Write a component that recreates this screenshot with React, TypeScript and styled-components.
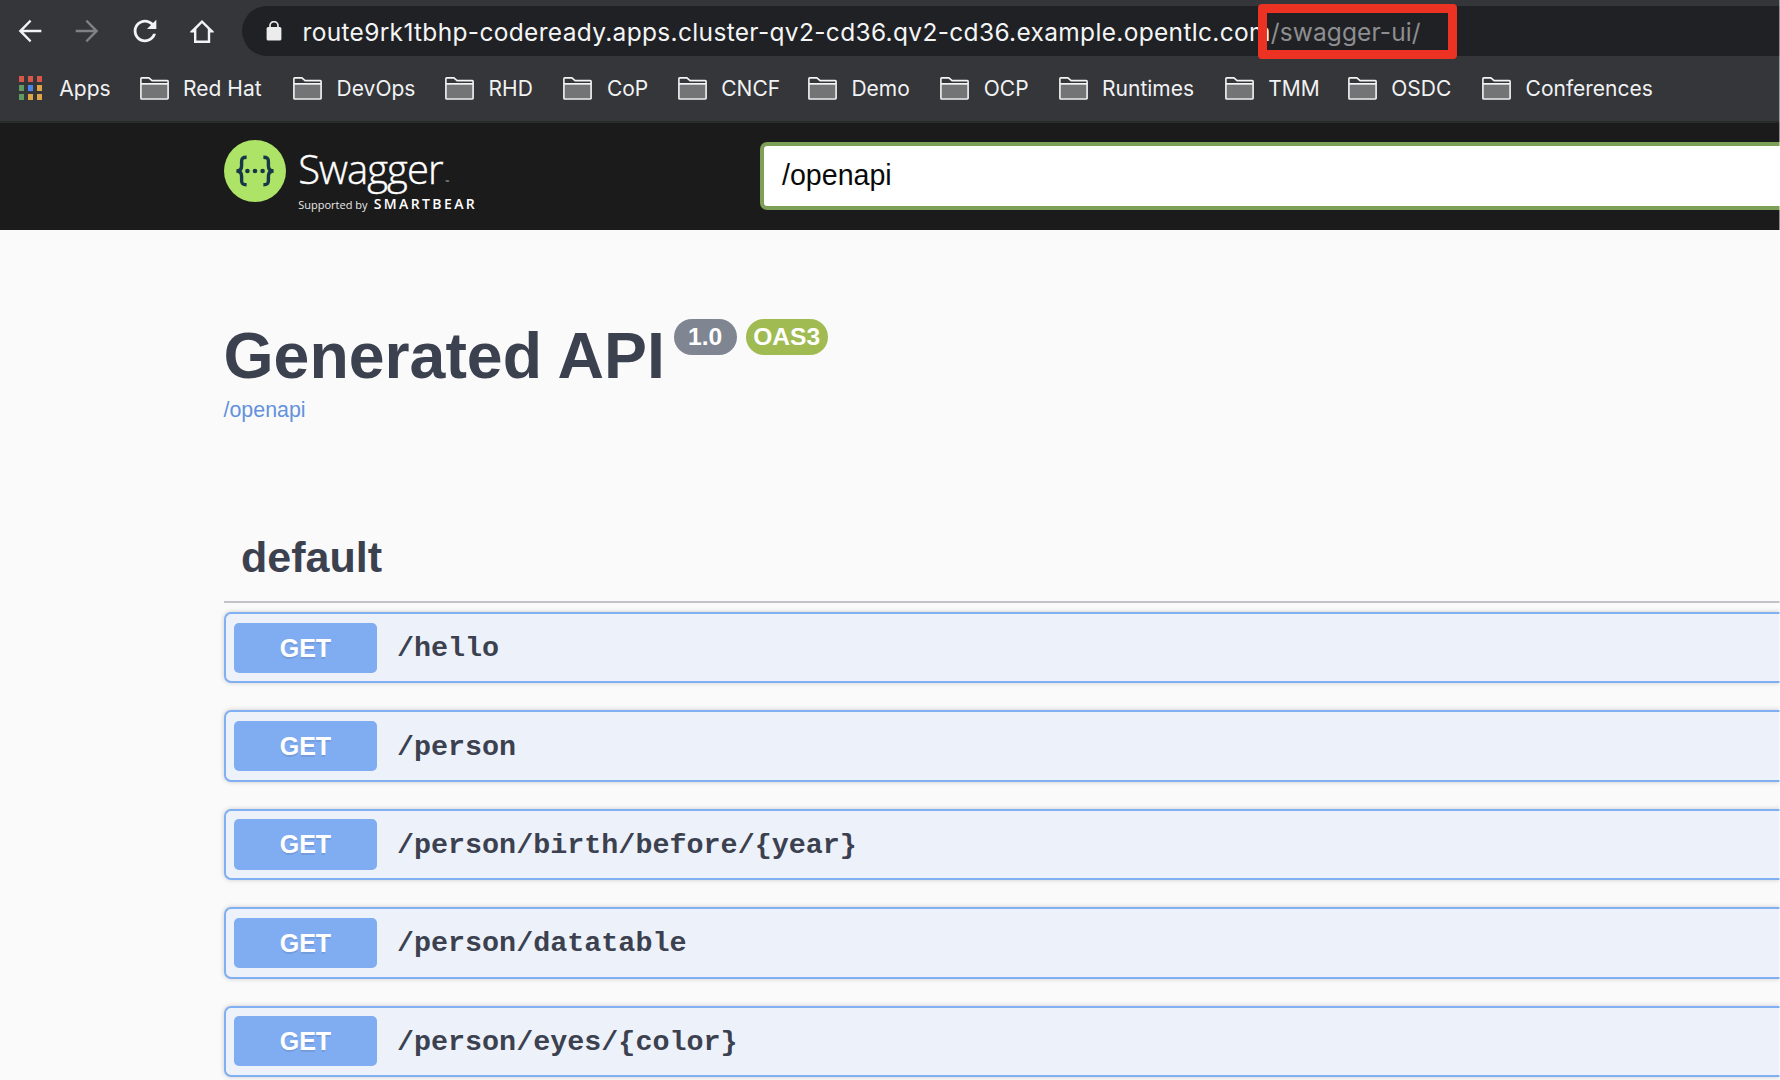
import React from "react";
import styled, { createGlobalStyle } from "styled-components";

const GlobalStyle = createGlobalStyle`
  *, *::before, *::after { box-sizing: border-box; }
  html, body { margin: 0; padding: 0; overflow: hidden; }
  body { background: #fafafa; }
`;

const sans = `"Liberation Sans", Arial, sans-serif`;
const ui = `Inter, Roboto, sans-serif`;
const ink = "#3c4150";

const Window = styled.div`
  position: relative;
  width: 1780px;
  height: 1080px;
  overflow: hidden;
  background: #fafafa;
  display: flex;
  flex-direction: column;
  font-family: ${sans};
  color: ${ink};
`;

const WindowEdge = styled.div`
  position: absolute;
  inset: 0 0 0 auto;
  width: 1px;
  background: rgba(255, 255, 255, 0.5);
`;

const Chrome = styled.header`
  flex: none;
  height: 123px;
  background: #35363a;
  border-bottom: 2px solid #292a2a;
  font-family: ${ui};
`;

const NavBar = styled.div`
  height: 62px;
  display: flex;
  align-items: center;
  padding-left: 13px;
`;

const NavButton = styled.button<{ $disabled?: boolean }>`
  flex: none;
  width: 34px;
  height: 34px;
  margin-right: 23.3px;
  padding: 0;
  border: 0;
  background: none;
  display: grid;
  place-items: center;
  color: ${(p) => (p.$disabled ? "#808184" : "#f1f3f4")};
  svg { display: block; }
`;

const Omnibox = styled.div`
  flex: 1;
  height: 50px;
  display: flex;
  align-items: center;
  padding-left: 24px;
  background: #202124;
  border-radius: 25px 0 0 25px;
  svg { flex: none; display: block; }
`;

const Url = styled.div`
  margin: 1px 0 0 20.3px;
  display: flex;
  font-size: 24.5px;
  line-height: 30px;
  white-space: nowrap;
  color: #f4f5f6;
`;

const Host = styled.span`
  letter-spacing: 0.325px;
`;

const UrlPath = styled.span`
  position: relative;
  letter-spacing: 0.1px;
  color: #8d8e91;
`;

const Highlight = styled.span`
  position: absolute;
  left: -13px;
  top: -13px;
  width: 199px;
  height: 55px;
  border: 9px solid #ec3323;
  border-radius: 4px;
`;

const Bookmarks = styled.nav`
  height: 52px;
  display: flex;
  align-items: center;
  padding-left: 19px;
`;

const Bookmark = styled.div<{ $width: number; $gap?: number }>`
  flex: none;
  width: ${(p) => p.$width}px;
  display: flex;
  align-items: center;
  gap: ${(p) => p.$gap ?? 14.5}px;
  font-size: 21px;
  line-height: 26px;
  white-space: nowrap;
  color: #f1f2f3;
  svg { flex: none; display: block; }
`;

const BookmarkLabel = styled.span`
  padding-top: 2px;
`;

const AppsGrid = styled.div`
  display: grid;
  grid-template-columns: repeat(3, 5.4px);
  grid-auto-rows: 5.6px;
  gap: 3.6px;
`;

const Dot = styled.i<{ $color: string }>`
  background: ${(p) => p.$color};
`;

const TopBar = styled.div`
  flex: none;
  height: 107px;
  background: #1b1b1b;
  display: flex;
  align-items: flex-start;
  padding-left: 223.5px;
`;

const Brand = styled.div`
  width: 536.5px;
  padding-top: 17px;
  display: flex;
  font-family: "Open Sans", "Noto Sans", sans-serif;
  color: #fff;
  svg { flex: none; display: block; }
`;

const BrandText = styled.div`
  margin-left: 12.7px;
`;

const BrandName = styled.div`
  display: flex;
  align-items: baseline;
  height: 53px;
  padding-top: 2px;
  font-size: 40px;
  font-weight: 300;
  line-height: 54px;
  letter-spacing: -0.95px;
  -webkit-text-stroke: 0.4px #fff;
`;

const Trademark = styled.span`
  margin-left: 3px;
  font-size: 5px;
  letter-spacing: 0;
  -webkit-text-stroke: 0;
`;

const Tagline = styled.div`
  display: flex;
  align-items: baseline;
  font-size: 11px;
  line-height: 20px;
  padding-top: 0.6px;
  color: #e8e8e8;
  white-space: nowrap;
`;

const Company = styled.span`
  margin-left: 6.2px;
  font-size: 14px;
  font-weight: 600;
  letter-spacing: 2.4px;
  color: #fff;
`;

const SpecInput = styled.div`
  flex: 1;
  height: 68px;
  margin-top: 19px;
  padding: 0 18px;
  display: flex;
  align-items: center;
  border: 4px solid #7d9f56;
  border-right: 0;
  border-radius: 7px 0 0 7px;
  background: #fff;
  color: #0a0a0a;
  font-size: 28.6px;
  line-height: 34px;
`;

const SpecText = styled.span`
  margin-top: -2px;
`;

const Page = styled.main`
  flex: 1;
  padding-left: 223.5px;
`;

const Info = styled.section`
  padding-top: 89px;
  height: 282px;
`;

const TitleRow = styled.div`
  display: flex;
  align-items: flex-start;
`;

const Title = styled.h1`
  margin: 0;
  width: 450.2px;
  font-size: 64.4px;
  line-height: 74px;
  white-space: nowrap;
`;

const Pill = styled.span<{ $color: string; $width: number }>`
  width: ${(p) => p.$width}px;
  height: 36px;
  margin-right: 9px;
  border-radius: 18px;
  background: ${(p) => p.$color};
  color: #fff;
  font-size: 24.6px;
  font-weight: 700;
  line-height: 35.5px;
  text-align: center;
`;

const SpecLink = styled.a`
  display: block;
  margin-top: 5px;
  font-size: 21.4px;
  line-height: 25px;
  color: #6492dc;
`;

const TagHeader = styled.h2`
  margin: 0 0 9px;
  height: 91px;
  padding: 20px 0 0 17.5px;
  border-bottom: 2px solid #c1c3c8;
  font-size: 43px;
  line-height: 50px;
`;

const OperationList = styled.div`
  display: flex;
  flex-direction: column;
  gap: 27px;
`;

const Operation = styled.div`
  height: 71.4px;
  display: flex;
  align-items: center;
  margin-top: -0.0px;
  padding-left: 8.4px;
  border: 2px solid #80b0f2;
  border-right: 0;
  border-radius: 7px 0 0 7px;
  background: #edf2fa;
  box-shadow: 0 0 5px rgba(0, 0, 0, 0.19);
`;

const Method = styled.span`
  flex: none;
  width: 143px;
  height: 50.4px;
  border-radius: 5px;
  background: #80adf2;
  color: #fff;
  font-size: 25px;
  font-weight: 700;
  line-height: 50px;
  text-align: center;
  text-shadow: 0 2px 0 rgba(0, 0, 0, 0.1);
`;

const Path = styled.span`
  margin-left: 20px;
  padding-top: 3px;
  font-family: "Liberation Mono", "Courier New", monospace;
  font-size: 28.4px;
  font-weight: 700;
  line-height: 34px;
`;

const BackIcon = ({ flip = false }: { flip?: boolean }) => (
  <svg width="34" height="34" viewBox="0 0 24 24" fill="currentColor">
    <path
      transform={flip ? "translate(24 0) scale(-1 1)" : undefined}
      d="M20 11.15H7.3l5.7-5.9L11.9 4.1 4 12l7.9 7.9 1.1-1.15-5.7-5.9H20z"
    />
  </svg>
);

const ReloadIcon = () => (
  <svg width="34" height="34" viewBox="0 0 24 24" fill="currentColor">
    <path d="M17.65 6.35C16.2 4.9 14.21 4 12 4c-4.42 0-7.99 3.58-7.99 8s3.57 8 7.99 8c3.73 0 6.84-2.55 7.73-6h-2.08c-.82 2.33-3.04 4-5.65 4-3.31 0-6-2.69-6-6s2.69-6 6-6c1.66 0 3.14.69 4.22 1.78L13.4 10.6H20V4l-2.35 2.35z" />
  </svg>
);

const HomeIcon = () => (
  <svg width="24" height="23" viewBox="0 0 24 23" fill="currentColor">
    <path
      fillRule="evenodd"
      d="M12 0 .2 11.6v1H4V23h16.2V12.6h3.6v-1zM12 3.3l5.8 5.8v11.5H6.4V9.1z"
    />
  </svg>
);

const LockIcon = () => (
  <svg width="16" height="20" viewBox="0 0 16 20">
    <path d="M4 7V4.6a4 4 0 0 1 8 0V7" fill="none" stroke="#e4e5e7" strokeWidth="1.7" />
    <rect x=".6" y="6" width="14.8" height="13.6" rx="1.6" fill="#ececed" />
  </svg>
);

const FolderIcon = () => (
  <svg width="29" height="23" viewBox="0 0 29 23">
    <path d="M1 7.4h27V21.6H1z" fill="#737476" />
    <path
      d="M.9 20.8V1.7a.8.8 0 0 1 .8-.8h7.2l3.2 2.7h15.2a.8.8 0 0 1 .8.8v16.8a.8.8 0 0 1-.8.8H1.7a.8.8 0 0 1-.8-.8zM1 6.9h27"
      fill="none"
      stroke="#f4f4f4"
      strokeWidth="1.6"
    />
  </svg>
);

const SwaggerMark = () => (
  <svg width="62" height="62" viewBox="0 0 62 62">
    <circle cx="31" cy="31" r="31" fill="#ade367" />
    <g fill="none" stroke="#173647" strokeWidth="3.4">
      <path d="M22.6 17.2c-4 0-5 1.3-5 4.2v4.4c0 3.4-1.2 5.2-5.2 5.2 4 0 5.2 1.8 5.2 5.2v4.4c0 2.9 1 4.2 5 4.2" />
      <path d="M39.4 17.2c4 0 5 1.3 5 4.2v4.4c0 3.4 1.2 5.2 5.2 5.2-4 0-5.2 1.8-5.2 5.2v4.4c0 2.9-1 4.2-5 4.2" />
    </g>
    <g fill="#173647">
      <circle cx="23.4" cy="31" r="2.3" />
      <circle cx="31" cy="31" r="2.3" />
      <circle cx="38.6" cy="31" r="2.3" />
    </g>
  </svg>
);

const red = "#d8564a";
const green = "#619b62";
const blue = "#4c86ea";
const amber = "#dfa446";
const dots = [red, red, red, green, blue, amber, green, amber, amber];

const folders: { label: string; width: number }[] = [
  { label: "Red Hat", width: 153.5 },
  { label: "DevOps", width: 152 },
  { label: "RHD", width: 118.3 },
  { label: "CoP", width: 114.4 },
  { label: "CNCF", width: 130.2 },
  { label: "Demo", width: 132.3 },
  { label: "OCP", width: 118.3 },
  { label: "Runtimes", width: 166.2 },
  { label: "TMM", width: 123 },
  { label: "OSDC", width: 134.3 },
  { label: "Conferences", width: 180 },
];

const paths = [
  "/hello",
  "/person",
  "/person/birth/before/{year}",
  "/person/datatable",
  "/person/eyes/{color}",
];

export default function App() {
  return (
    <Window>
      <GlobalStyle />
      <Chrome>
        <NavBar>
          <NavButton aria-label="Back"><BackIcon /></NavButton>
          <NavButton aria-label="Forward" $disabled><BackIcon flip /></NavButton>
          <NavButton aria-label="Reload"><ReloadIcon /></NavButton>
          <NavButton aria-label="Home"><HomeIcon /></NavButton>
          <Omnibox>
            <LockIcon />
            <Url>
              <Host>route9rk1tbhp-codeready.apps.cluster-qv2-cd36.qv2-cd36.example.opentlc.com</Host>
              <UrlPath>
                /swagger-ui/
                <Highlight />
              </UrlPath>
            </Url>
          </Omnibox>
        </NavBar>
        <Bookmarks>
          <Bookmark $width={120.6} $gap={17}>
            <AppsGrid>
              {dots.map((c, i) => (
                <Dot key={i} $color={c} />
              ))}
            </AppsGrid>
            <BookmarkLabel>Apps</BookmarkLabel>
          </Bookmark>
          {folders.map((f) => (
            <Bookmark key={f.label} $width={f.width}>
              <FolderIcon />
              <BookmarkLabel>{f.label}</BookmarkLabel>
            </Bookmark>
          ))}
        </Bookmarks>
      </Chrome>
      <TopBar>
        <Brand>
          <SwaggerMark />
          <BrandText>
            <BrandName>
              Swagger<Trademark>™</Trademark>
            </BrandName>
            <Tagline>
              Supported by<Company>SMARTBEAR</Company>
            </Tagline>
          </BrandText>
        </Brand>
        <SpecInput>
          <SpecText>/openapi</SpecText>
        </SpecInput>
      </TopBar>
      <Page>
        <Info>
          <TitleRow>
            <Title>Generated API</Title>
            <Pill $color="#7f8591" $width={63}>1.0</Pill>
            <Pill $color="#9fbb51" $width={82}>OAS3</Pill>
          </TitleRow>
          <SpecLink>/openapi</SpecLink>
        </Info>
        <TagHeader>default</TagHeader>
        <OperationList>
          {paths.map((p) => (
            <Operation key={p}>
              <Method>GET</Method>
              <Path>{p}</Path>
            </Operation>
          ))}
        </OperationList>
      </Page>
      <WindowEdge />
    </Window>
  );
}
